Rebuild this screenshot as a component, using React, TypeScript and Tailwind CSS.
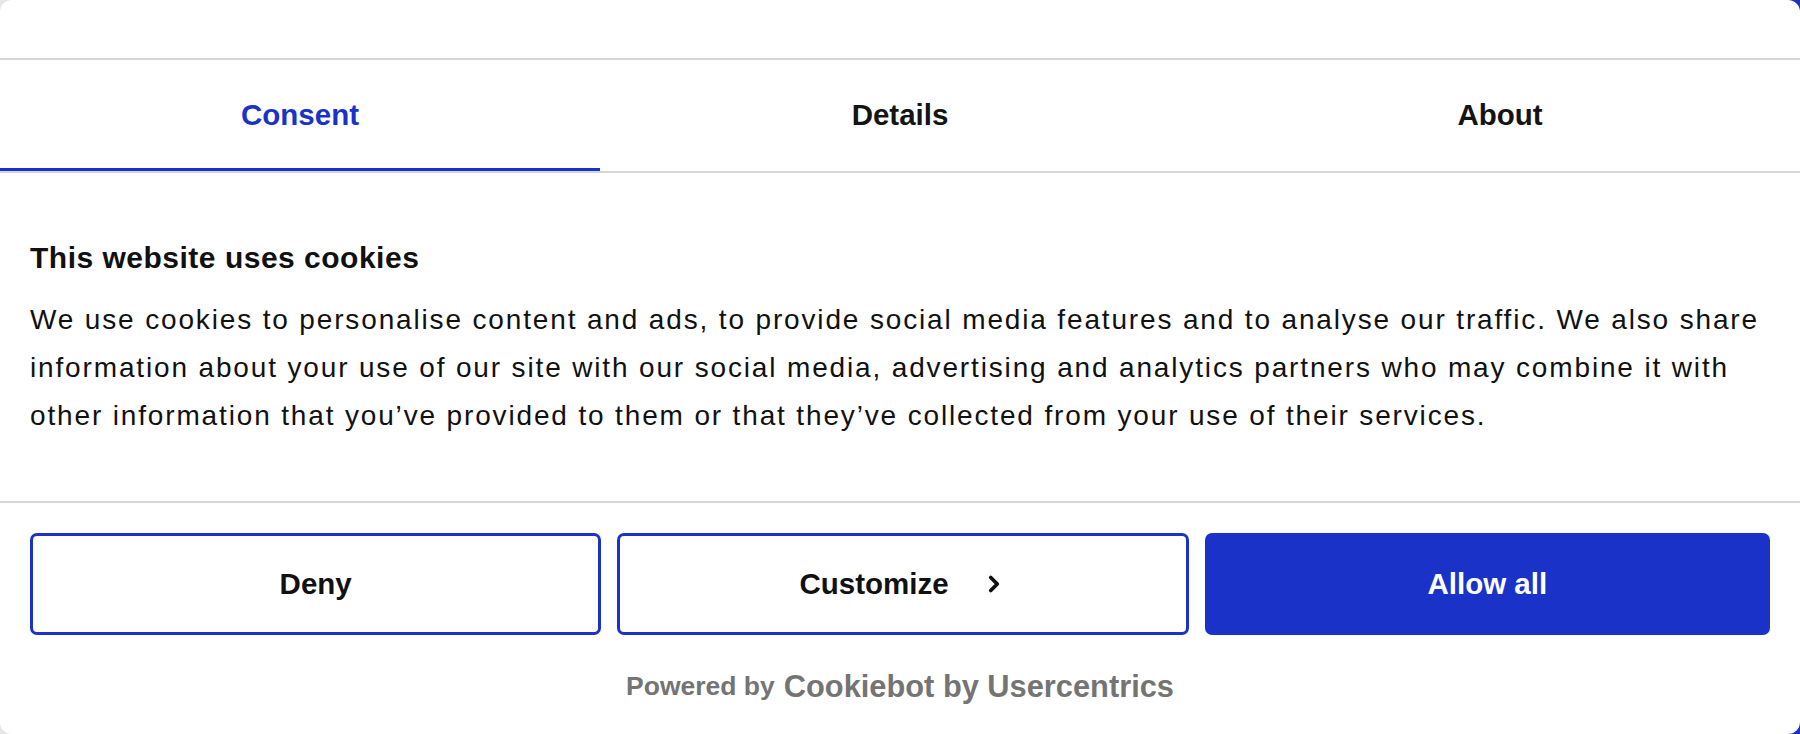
import { ChevronRight } from "lucide-react";

const font = { fontFamily: '"Liberation Sans", Arial, sans-serif' };

export default function App() {
    const tabs = [
        { label: "Consent", active: true },
        { label: "Details", active: false },
        { label: "About", active: false },
    ];

    return (
        <div className="h-[734px] w-full bg-[linear-gradient(to_right,#e6e6e6_50%,#1b32c9_50%)]" style={font}>
            <div className="h-full bg-white rounded-[12px] flex flex-col overflow-hidden">
                {/* header */}
                <div className="h-[60px] border-b-2 border-[#d6d6d6]" />

                {/* tabs */}
                <div className="flex border-b-2 border-[#d6d6d6]">
                    {tabs.map((tab) => (
                        <button
                            key={tab.label}
                            className={
                                tab.active
                                    ? "flex-1 h-[111px] flex items-center justify-center text-[29.5px] font-bold text-[#1b32c9] shadow-[inset_0_-3px_0_#1b32c9]"
                                    : "flex-1 h-[111px] flex items-center justify-center text-[29.5px] font-bold text-[#141414]"
                            }
                        >
                            {tab.label}
                        </button>
                    ))}
                </div>

                {/* body */}
                <div className="px-[30px] pt-[61px] pb-[61px] border-b-2 border-[#d6d6d6]">
                    <h2 className="text-[30px] leading-[48px] font-bold tracking-[0.5px] text-[#111111] mb-[14px]">
                        This website uses cookies
                    </h2>
                    <p className="text-[28px] leading-[48px] tracking-[1.85px] text-[#111111]">
                        We use cookies to personalise content and ads, to provide social media features and to analyse our traffic. We also share information about your use of our site with our social media, advertising and analytics partners who may combine it with other information that you’ve provided to them or that they’ve collected from your use of their services.
                    </p>
                </div>

                {/* buttons */}
                <div className="flex gap-4 px-[30px] pt-[30px]">
                    <button className="flex-1 h-[102px] rounded-[7px] border-[3px] border-[#1b32c9] text-[29.5px] font-bold text-[#111111]">
                        Deny
                    </button>
                    <button className="flex-1 h-[102px] rounded-[7px] border-[3px] border-[#1b32c9] text-[29.5px] font-bold text-[#111111] flex items-center justify-center gap-[32px]">
                        Customize
                        <ChevronRight size={26} strokeWidth={3.5} className="text-[#111111]" />
                    </button>
                    <button className="flex-1 h-[102px] rounded-[7px] bg-[#1b32c9] text-[29.5px] font-bold text-white">
                        Allow all
                    </button>
                </div>

                {/* footer */}
                <div className="flex-1 flex items-center justify-center gap-[9px] pt-[5px] font-bold text-[#747474]">
                    <span className="text-[26.5px]">Powered by</span>
                    <span className="text-[30.8px]">Cookiebot by Usercentrics</span>
                </div>
            </div>
        </div>
    );
}
